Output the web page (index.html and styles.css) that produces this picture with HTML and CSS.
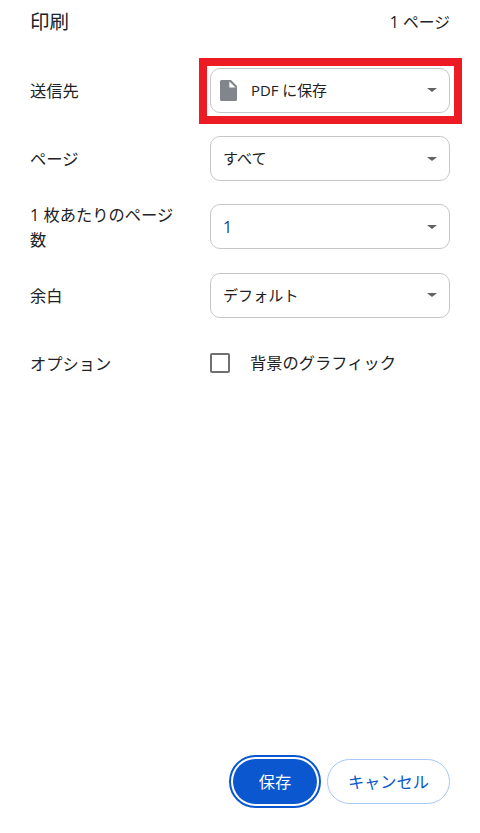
FILE: index.html
```html
<!DOCTYPE html>
<html lang="ja">
<head>
    <meta charset="UTF-8">
    <meta name="viewport" content="width=device-width, initial-scale=1.0">
    <title>印刷</title>
    <link rel="stylesheet" href="styles.css">
</head>
<body>
    <header class="header">
        <h1>印刷</h1>
        <span class="sheet-count">1 ページ</span>
    </header>

    <main class="settings">
        <div class="row">
            <div class="label">送信先</div>
            <div class="select destination">
                <svg class="file-icon" width="17" height="21" viewBox="0 0 17 21">
                    <path d="M1.5 0H11L17 6V19.5a1.5 1.5 0 0 1-1.5 1.5H1.5a1.5 1.5 0 0 1-1.5-1.5V1.5a1.5 1.5 0 0 1 1.5-1.5z" fill="#80868b"/>
                    <path d="M9.3 1.6V7.6H15.6z" fill="#fff"/>
                </svg>
                <span>PDF に保存</span>
                <span class="arrow"></span>
                <div class="highlight"></div>
            </div>
        </div>
        <div class="row">
            <div class="label">ページ</div>
            <div class="select"><span>すべて</span><span class="arrow"></span></div>
        </div>
        <div class="row">
            <div class="label">1 枚あたりのページ数</div>
            <div class="select"><span class="number">1</span><span class="arrow"></span></div>
        </div>
        <div class="row">
            <div class="label">余白</div>
            <div class="select"><span>デフォルト</span><span class="arrow"></span></div>
        </div>
        <div class="row option-row">
            <div class="label">オプション</div>
            <div class="option">
                <span class="checkbox"></span>
                <span>背景のグラフィック</span>
            </div>
        </div>
    </main>

    <footer class="buttons">
        <button class="save">保存</button>
        <button class="cancel">キャンセル</button>
    </footer>
</body>
</html>
```

FILE: styles.css
```css
* {
    box-sizing: border-box;
}
body {
    display: flex;
    flex-direction: column;
    height: 833px;
    margin: 0;
    padding: 0 30px 29px;
    background: #fff;
    color: #202124;
    font-family: "Open Sans", "Noto Sans CJK JP", sans-serif;
    font-size: 16.25px;
    font-weight: 400;
    line-height: 25px;
    overflow: hidden;
}
.header {
    display: flex;
    align-items: center;
    justify-content: space-between;
    height: 43px;
    margin-bottom: 13px;
}
h1 {
    margin: 0;
    font-size: 19.5px;
    font-weight: 400;
}
.sheet-count {
    padding-top: 2px;
    font-size: 15.8px;
}
.row {
    display: flex;
    align-items: center;
    height: 68.4px;
}
.label {
    width: 180px;
    padding-top: 2px;
    padding-right: 30px;
}
.select {
    position: relative;
    display: flex;
    align-items: center;
    width: 240px;
    height: 45px;
    padding: 0 12px;
    border: 1px solid #c4c7c9;
    border-radius: 10px;
    font-size: 15.1px;
}
.destination {
    padding-left: 9px;
    font-size: 14.9px;
}
.file-icon {
    margin-right: 14px;
}
.number {
    padding-top: 2px;
    color: #1a3c8c;
    font-size: 16px;
}
.arrow {
    margin-left: auto;
    border: 4.5px solid transparent;
    border-width: 4px 5px 0;
    border-top-color: #5f6368;
}
.highlight {
    position: absolute;
    top: -11px;
    left: -12px;
    width: 263px;
    height: 66px;
    border: 8px solid #ed1c24;
}
.option-row {
    height: 67px;
}
.option {
    display: flex;
    align-items: center;
    gap: 20px;
}
.checkbox {
    width: 20px;
    height: 20px;
    border: 2px solid #6e7072;
    border-radius: 2px;
}
.buttons {
    display: flex;
    justify-content: flex-end;
    gap: 10px;
    margin-top: auto;
}
button {
    height: 45px;
    padding: 2px 0 0;
    border-radius: 23px;
    font: inherit;
}
.save {
    width: 84px;
    border: 0;
    background: #0b57d0;
    color: #fff;
    outline: 2px solid #0b57d0;
    outline-offset: 2px;
}
.cancel {
    width: 123px;
    border: 1px solid #a8c7fa;
    background: #fff;
    color: #0b57d0;
}
```
